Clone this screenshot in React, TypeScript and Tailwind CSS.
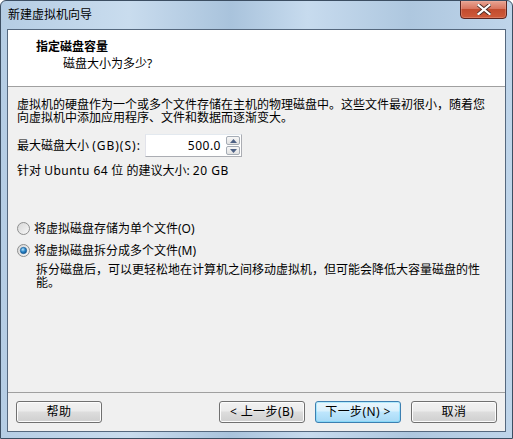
const ui = { fontFamily: '"Noto Sans", "Noto Sans CJK SC", sans-serif' };

function Radio({ checked }: { checked?: boolean }) {
  return (
    <svg width="13" height="13" viewBox="0 0 13 13" className="shrink-0">
      <defs>
        <linearGradient id="rg" x1="0" y1="0" x2="1" y2="1">
          <stop offset="0" stopColor="#d6d6d6" />
          <stop offset="1" stopColor="#f8f8f8" />
        </linearGradient>
        <radialGradient id="dot" cx="0.4" cy="0.35" r="0.7">
          <stop offset="0" stopColor="#b9e4fb" />
          <stop offset="0.5" stopColor="#2a87c9" />
          <stop offset="1" stopColor="#0d4f8c" />
        </radialGradient>
      </defs>
      <circle cx="6.5" cy="6.5" r="6" fill="url(#rg)" stroke="#8e8f8f" />
      {checked && <circle cx="6.5" cy="6.5" r="3.2" fill="url(#dot)" stroke="#1b5a94" strokeWidth="0.6" />}
    </svg>
  );
}

function Button({ label, primary, className = '' }: { label: string; primary?: boolean; className?: string }) {
  return (
    <div
      className={
        'h-[22px] w-[86px] rounded-[3px] border flex items-center justify-center text-[12px] text-black tracking-[0.4px] ' +
        (primary
          ? 'border-[#3c7fb1] bg-[linear-gradient(#eaf6fd_0%,#d9f0fc_45%,#bee6fd_50%,#a7d9f5_100%)] shadow-[inset_0_0_0_1px_#48d6fb55] '
          : 'border-[#707070] bg-[linear-gradient(#f2f2f2_0%,#ebebeb_45%,#dddddd_50%,#cfcfcf_100%)] shadow-[inset_0_0_0_1px_#fcfcfc] ') +
        className
      }
    >
      {label}
    </div>
  );
}

export default function App() {
  return (
    <div
      style={ui}
      className="w-[513px] h-[439px] flex flex-col overflow-hidden rounded-t-[6px] border border-[#3c4e62] bg-[linear-gradient(90deg,#b5cde4_0%,#c9dcee_25%,#a9c3dc_45%,#c7dbee_60%,#aec7df_80%,#bfd5ea_100%)]"
    >
      {/* title bar */}
      <div className="h-[28px] flex items-start justify-between shrink-0">
        <span className="pl-[7px] pt-[5px] text-[12px] text-black leading-[17px]">新建虚拟机向导</span>
        <div className="mr-[5px] w-[47px] h-[19px] -mt-px rounded-b-[4px] border border-[#5a2420] bg-[linear-gradient(#e8a493_0%,#d9755f_45%,#c24c2f_50%,#cf5a3a_100%)] flex items-center justify-center shadow-[inset_0_0_0_1px_#f0b8a855]">
          <svg width="14" height="11" viewBox="0 0 14 11">
            <path d="M1.5 1 L12.5 10 M12.5 1 L1.5 10" stroke="#4a2a24" strokeWidth="4" strokeLinecap="square" />
            <path d="M1.5 1 L12.5 10 M12.5 1 L1.5 10" stroke="#ffffff" strokeWidth="2.2" strokeLinecap="square" />
          </svg>
        </div>
      </div>

      {/* client area */}
      <div className="flex-1 mx-[6px] mb-[6px] border border-[#55687e] bg-[#f0f0f0] flex flex-col text-[12px] text-black">
        <div className="h-[57px] bg-white border-b border-[#a0a0a0] shrink-0 leading-[17px]">
          <div className="pl-[28px] pt-[8px] font-bold">指定磁盘容量</div>
          <div className="pl-[55px]">磁盘大小为多少?</div>
        </div>

        <div className="flex-1 pl-[9px] pr-[8px] pt-[11px] leading-[13px]">
          <p>
            虚拟机的硬盘作为一个或多个文件存储在主机的物理磁盘中。这些文件最初很小，随着您
            <br />
            向虚拟机中添加应用程序、文件和数据而逐渐变大。
          </p>

          <div className="flex items-center mt-[10px] h-[23px]">
            <span className="w-[128px] whitespace-nowrap">
              最大磁盘大小 <span className="tracking-[1px]">(GB)(S):</span>
            </span>
            <div className="flex h-[23px] w-[97px] border border-[#abadb3] border-t-[#e3e9ef] border-l-[#e2e3ea] bg-white">
              <span className="flex-1 text-right pr-[4px] leading-[21px] tracking-[0.5px]">500.0</span>
              <div className="w-[16px] flex flex-col gap-px p-px">
                <div className="flex-1 rounded-[2px] border border-[#a5acb5] bg-[linear-gradient(#f7f7f7,#e2e2e2)] flex items-center justify-center">
                  <svg width="7" height="4" viewBox="0 0 7 4"><path d="M0 4 L3.5 0 L7 4Z" fill="#4d6185" /></svg>
                </div>
                <div className="flex-1 rounded-[2px] border border-[#a5acb5] bg-[linear-gradient(#f7f7f7,#e2e2e2)] flex items-center justify-center">
                  <svg width="7" height="4" viewBox="0 0 7 4"><path d="M0 0 L7 0 L3.5 4Z" fill="#4d6185" /></svg>
                </div>
              </div>
            </div>
          </div>

          <p className="mt-[7px]">
            针对 <span className="tracking-[0.5px]">Ubuntu 64</span> 位 的建议大小: <span className="tracking-[0.5px]">20 GB</span>
          </p>

          <div className="mt-[45px] flex items-center gap-[4px]">
            <Radio />
            <span>将虚拟磁盘存储为单个文件(O)</span>
          </div>
          <div className="mt-[9px] flex items-center gap-[4px]">
            <Radio checked />
            <span>将虚拟磁盘拆分成多个文件(M)</span>
          </div>
          <p className="mt-[6px] pl-[19px]">
            拆分磁盘后，可以更轻松地在计算机之间移动虚拟机，但可能会降低大容量磁盘的性
            <br />
            能。
          </p>
        </div>

        {/* footer */}
        <div className="h-[39px] border-t border-[#a0a0a0] shrink-0 flex items-start pt-[8px] pl-[8px] pr-[8px]">
          <Button label="帮助" />
          <div className="flex-1" />
          <Button label="< 上一步(B)" />
          <Button label="下一步(N) >" primary className="ml-[10px]" />
          <Button label="取消" className="ml-[10px]" />
        </div>
      </div>
    </div>
  );
}
